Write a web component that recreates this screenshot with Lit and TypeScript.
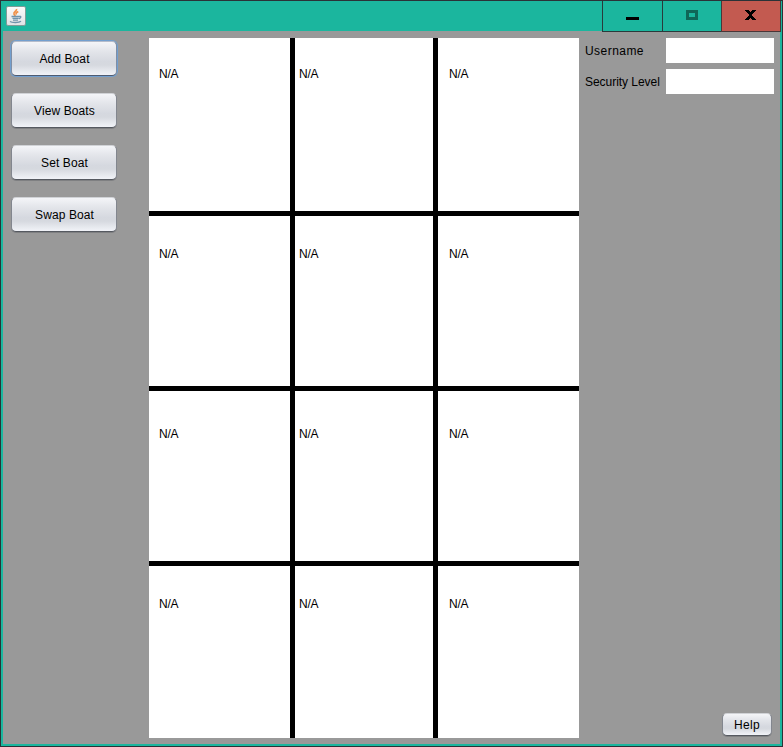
import { LitElement, html, css } from "lit";
import { customElement, property } from "lit/decorators.js";

@customElement("nimbus-button")
class NimbusButton extends LitElement {
  @property({ type: Boolean, reflect: true }) focused = false;
  @property({ type: Boolean, reflect: true }) small = false;

  static styles = css`
    :host { display: block; }
    .button {
      display: block;
      box-sizing: border-box;
      width: 106px;
      height: 35px;
      margin: 0;
      padding: 0 0 0 1px;
      border: 1px solid;
      border-color: #d0d2d6 #82868e #555960 #82868e;
      border-radius: 5px;
      background: linear-gradient(#f4f5f8 0%, #e3e5ea 28%, #d5d8df 60%, #d6d9df 70%, #f1f3f8 100%);
      box-shadow: 0 1px 0 rgba(80, 84, 90, 0.35);
      font: 12px "Liberation Sans", Arial, sans-serif;
      letter-spacing: 0.1px;
      text-align: center;
      color: #000;
    }
    :host([focused]) .button {
      box-shadow: 0 0 0 1px #729fcf;
      border-color: #b5bccb #7f8ea5 #4d5b72 #7f8ea5;
    }
    :host([small]) .button { width: 50px; height: 23px; padding-left: 0; letter-spacing: 0.3px; }
  `;

  render() {
    return html`<button class="button"><slot></slot></button>`;
  }
}

@customElement("title-bar")
class TitleBar extends LitElement {
  static styles = css`
    :host { display: flex; height: 30px; margin-right: 1px; justify-content: space-between; }
    .icon { display: block; margin: 5px 0 0 5px; }
    .controls { display: flex; height: 31px; position: relative; }
    .control {
      box-sizing: border-box;
      width: 60px;
      height: 31px;
      border-left: 1px solid #2a3a3b;
      border-bottom: 1px solid #2a3a3b;
      background: #1bb69e;
    }
    .maximize { width: 59px; }
    .close { width: 60px; background: #c35a50; border-color: #493638; border-right: 1px solid #493638; }
    svg { display: block; }
  `;

  render() {
    return html`
      <svg class="icon" width="20" height="20" viewBox="0 0 20 20">
        <defs>
          <linearGradient id="tile" x2="0" y2="1">
            <stop offset="0" stop-color="#fbfbfb" />
            <stop offset="1" stop-color="#dfe2e5" />
          </linearGradient>
        </defs>
        <rect x="0.5" y="0.5" width="19" height="19" rx="1.5" fill="url(#tile)" stroke="#7f9c98" />
        <path d="M10.5 3C11.2 5 7.2 6 8 8 8.3 9 9 9.3 9.2 10M12.3 5.6C10 6.4 9.6 7.3 10.5 8.6" fill="none" stroke="#f0924a" stroke-width="1.7" />
        <path d="M5.5 10.5h7.5M6.5 12.4h6M7 14.1h5M13 10.4c2.6-.5 2.2 1.8-.2 2.3M4 15.5c2 1.4 9 1.4 11-.2" fill="none" stroke="#6f93ab" stroke-width="1.4" />
      </svg>
      <div class="controls">
        <div class="control minimize">
          <svg width="59" height="30"><path d="M23 16h13v3H23z" /></svg>
        </div>
        <div class="control maximize">
          <svg width="58" height="30"><path d="M24.5 10.5h9v7h-9z" fill="none" stroke="#0f6657" stroke-width="3" /></svg>
        </div>
        <div class="control close">
          <svg width="58" height="30" shape-rendering="crispEdges"><path d="M23 9h4v1h1v1h1v-1h1V9h4v1h-1v1h-1v1h-1v1h-1v2h1v1h1v1h1v1h1v1h-4v-1h-1v-1h-1v1h-1v1h-4v-1h1v-1h1v-1h1v-1h1v-2h-1v-1h-1v-1h-1v-1h-1z" /></svg>
        </div>
      </div>
    `;
  }
}

@customElement("berth-grid")
class BerthGrid extends LitElement {
  private berths: string[] = Array(12).fill("N/A");

  static styles = css`
    :host {
      display: grid;
      width: 430px;
      height: 700px;
      grid-template-columns: 141px 138px 141px;
      grid-template-rows: 173px 170px 170px 172px;
      gap: 5px;
      background: #000;
    }
    .berth {
      box-sizing: border-box;
      padding: 29px 0 0 10px;
      background: #fff;
      font: 12px/14px "Liberation Sans", Arial, sans-serif;
      letter-spacing: -0.25px;
    }
    .berth:nth-child(3n + 2) { padding-left: 4px; }
    .berth:nth-child(3n) { padding-left: 11px; }
    .berth:nth-child(n + 4) { padding-top: 31px; }
    .berth:nth-child(n + 7) { padding-top: 36px; }
    .berth:nth-child(n + 10) { padding-top: 31px; }
  `;

  render() {
    return this.berths.map((b) => html`<div class="berth">${b}</div>`);
  }
}

@customElement("app-root")
class AppRoot extends LitElement {
  static styles = css`
    :host { display: block; }
    .window {
      box-sizing: border-box;
      width: 783px;
      height: 747px;
      border: 1px solid #2b3237;
      background: #1bb69e;
      font: 12px/14px "Liberation Sans", Arial, sans-serif;
      color: #000;
    }
    .content {
      display: flex;
      box-sizing: border-box;
      height: 713px;
      margin: 0 2px;
      padding: 7px 6px 6px 8px;
      background: #999;
    }
    .actions {
      display: flex;
      flex-direction: column;
      gap: 17px;
      width: 138px;
      padding-top: 3px;
    }
    .side {
      display: flex;
      flex: 1;
      flex-direction: column;
      justify-content: space-between;
      align-items: flex-end;
      padding-left: 6px;
    }
    .form {
      display: grid;
      grid-template-columns: 81px 108px;
      grid-auto-rows: 25px;
      row-gap: 6px;
      align-items: center;
    }
    .field { box-sizing: border-box; width: 108px; height: 25px; border: 0; margin: 0; background: #fff; }
    .name { letter-spacing: 0.45px; }
    .level { letter-spacing: -0.04px; }
    .help { margin: 0 2px 2px 0; }
  `;

  render() {
    return html`
      <div class="window">
        <title-bar></title-bar>
        <div class="content">
          <div class="actions">
            <nimbus-button focused>Add Boat</nimbus-button>
            <nimbus-button>View Boats</nimbus-button>
            <nimbus-button>Set Boat</nimbus-button>
            <nimbus-button>Swap Boat</nimbus-button>
          </div>
          <berth-grid></berth-grid>
          <div class="side">
            <div class="form">
              <label class="name" for="user">Username</label>
              <input class="field" id="user" />
              <label class="level" for="level">Security Level</label>
              <input class="field" id="level" />
            </div>
            <nimbus-button class="help" small>Help</nimbus-button>
          </div>
        </div>
      </div>
    `;
  }
}
